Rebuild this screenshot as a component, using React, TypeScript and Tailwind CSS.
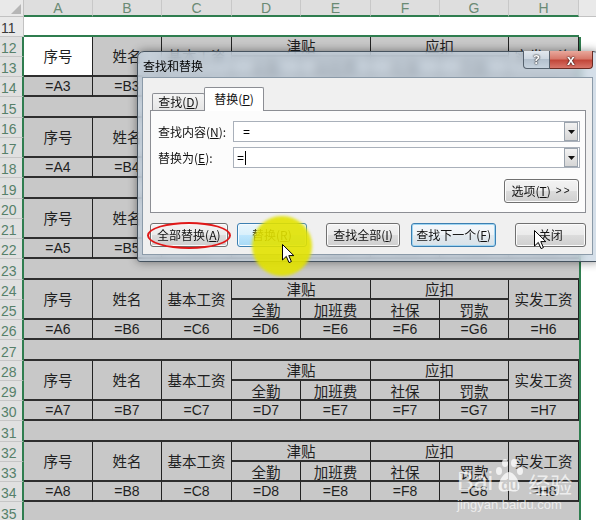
import React from "react";

const GRID = "grid grid-cols-[24px_69px_69px_70px_69px_70px_69px_69px_70px_1fr]";
const ZH = "font-['Noto_Sans_CJK_SC','Noto_Sans',sans-serif]";
const LAT = "font-['Liberation_Sans','Noto_Sans_CJK_SC',sans-serif]";
const COLSTART = ["col-start-2", "col-start-3", "col-start-4", "col-start-5", "col-start-6", "col-start-7", "col-start-8", "col-start-9"];
const LETTERS = ["A", "B", "C", "D", "E", "F", "G", "H"];

function RowHead({ n, cls, plain }: { n: number; cls: string; plain?: boolean }) {
  return (
    <div
      className={`${cls} ${plain ? "bg-[#e9e9e9] border-r border-r-[#c2c2c2] text-[#3a3a3a]" : "bg-[#e0e0e0] border-r-2 border-r-[#2f7d4f] text-[#56806a]"} border-b border-b-[#c6c6c6] flex items-center pl-[1px] pt-[3px] text-[14px] leading-none ${LAT}`}
    >
      {n}
    </div>
  );
}

function Block({ start, k, first }: { start: number; k: number; first?: boolean }) {
  const base = "border-r border-r-[#222222] border-b-2 border-b-[#2e2e2e] flex items-center justify-center text-[#1f1f1f]";
  const g = "bg-[#c8c8c8]";
  const zh = `${base} ${ZH} text-[14.5px] leading-none`;
  const fm = `${base} ${g} ${LAT} text-[14px] leading-none`;
  return (
    <div className={`${GRID} grid-rows-[20px_20px_20px_21px]`}>
      <RowHead n={start} cls="col-start-1 row-start-1" />
      <RowHead n={start + 1} cls="col-start-1 row-start-2" />
      <RowHead n={start + 2} cls="col-start-1 row-start-3" />
      <RowHead n={start + 3} cls="col-start-1 row-start-4" />
      <div className={`${zh} ${first ? "bg-white" : g} col-start-2 row-start-1 row-span-2`}>序号</div>
      <div className={`${zh} ${g} col-start-3 row-start-1 row-span-2`}>姓名</div>
      <div className={`${zh} ${g} col-start-4 row-start-1 row-span-2`}>基本工资</div>
      <div className={`${zh} ${g} col-start-5 col-span-2 row-start-1`}>津贴</div>
      <div className={`${zh} ${g} col-start-7 col-span-2 row-start-1`}>应扣</div>
      <div className={`${zh} ${g} col-start-9 row-start-1 row-span-2`}>实发工资</div>
      <div className={`${zh} ${g} col-start-5 row-start-2 pt-[3px]`}>全勤</div>
      <div className={`${zh} ${g} col-start-6 row-start-2 pt-[3px]`}>加班费</div>
      <div className={`${zh} ${g} col-start-7 row-start-2 pt-[3px]`}>社保</div>
      <div className={`${zh} ${g} col-start-8 row-start-2 pt-[3px]`}>罚款</div>
      {LETTERS.map((l, i) => (
        <div key={l} className={`${fm} ${COLSTART[i]} row-start-3`}>
          ={l}
          {k}
        </div>
      ))}
      <div className="col-start-2 col-span-8 row-start-4 bg-[#c8c8c8] border-b-2 border-b-[#2e2e2e]" />
      <div className="col-start-10 row-start-1 row-span-4 bg-white border-l-2 border-l-[#2f7d4f]" />
    </div>
  );
}

function Btn({ w, ml, kind, children }: { w: string; ml: string; kind?: "hover" | "focus"; children: React.ReactNode }) {
  const normal =
    "border-[#707070] bg-[linear-gradient(#f3f3f3,#ebebeb_48%,#dcdcdc_52%,#cfcfcf)] shadow-[inset_0_0_0_1px_#fbfbfb]";
  const hover =
    "border-[#3c7fb1] bg-[linear-gradient(#eaf6fd,#d9f0fc_48%,#bee6fd_52%,#a7d9f5)] shadow-[inset_0_0_0_1px_#f5fbfe]";
  const focus =
    "border-[#3c7fb1] bg-[linear-gradient(#f4f8fb,#eef3f7_48%,#e2e9ee_52%,#d8e2e9)] shadow-[inset_0_0_0_1px_#9fd5f2]";
  return (
    <div
      className={`${w} ${ml} h-[24px] rounded-[3px] border ${kind === "hover" ? hover : kind === "focus" ? focus : normal} flex items-center justify-center text-[12px] text-[#111] ${ZH} leading-none`}
    >
      {children}
    </div>
  );
}

function Arrow({ cls }: { cls: string }) {
  return (
    <svg className={cls} width="13" height="20" viewBox="0 0 13 20">
      <path d="M0.5 0.5 L0.5 16 L4.3 12.4 L7 18.6 L9.4 17.6 L6.8 11.6 L11.8 11.6 Z" fill="#fff" stroke="#000" strokeWidth="1" strokeLinejoin="round" />
    </svg>
  );
}

function Dropdown() {
  return (
    <div className="ml-auto w-[14px] h-[19px] border border-[#9aa3ad] bg-[linear-gradient(#f2f2f2,#e4e4e4_50%,#d6d6d6)] flex items-center justify-center">
      <svg width="7" height="4" viewBox="0 0 7 4">
        <path d="M0 0 L7 0 L3.5 4 Z" fill="#111" />
      </svg>
    </div>
  );
}

export default function App() {
  return (
    <div className="relative w-[596px] h-[520px] overflow-hidden bg-white">
      {/* column header */}
      <div className={`${GRID} h-[17px]`}>
        <div className="bg-[#e9e9e9] border-r border-b border-[#c2c2c2] relative">
          <svg className="absolute right-[2px] bottom-[2px]" width="10" height="10" viewBox="0 0 10 10">
            <path d="M10 0 L10 10 L0 10 Z" fill="#b6b6b6" />
          </svg>
        </div>
        {LETTERS.map((l) => (
          <div
            key={l}
            className={`bg-[#dedede] border-r border-r-[#c8c8c8] border-b-2 border-b-[#2f7d4f] flex items-center justify-center text-[14px] leading-none text-[#6a8a74] ${LAT}`}
          >
            {l}
          </div>
        ))}
        <div className="bg-[#e9e9e9] border-b border-[#c2c2c2]" />
      </div>
      {/* row 11 */}
      <div className={`${GRID} h-[20px]`}>
        <RowHead n={11} cls="col-start-1" plain />
        <div className="col-span-8 bg-white border-b-2 border-b-[#2f7d4f]" />
        <div className="bg-white" />
      </div>
      <Block start={12} k={3} first />
      <Block start={16} k={4} />
      <Block start={20} k={5} />
      <Block start={24} k={6} />
      <Block start={28} k={7} />
      <Block start={32} k={8} />

      {/* Find & Replace dialog */}
      <div className="absolute left-[137px] top-[51px] w-[463px] h-[211px] rounded-t-[7px] rounded-b-[3px] border border-[#46535f] bg-[#c3d2e0]/70 backdrop-blur-[4px] shadow-[0_0_10px_rgba(0,0,0,0.45)] flex flex-col">
        <div className="h-[25px] flex items-start shrink-0">
          <span className={`ml-[5px] mt-[6px] text-[12px] leading-[16px] text-black ${ZH}`}>查找和替换</span>
          <div className="ml-auto mr-[6px] -mt-px flex">
            <div className="w-[27px] h-[18px] rounded-bl-[4px] border border-t-0 border-[#56626e] bg-[linear-gradient(#e2e8ee,#cbd5df_50%,#b3c0cd_50%,#c7d3de)] flex items-center justify-center">
              <span className="text-[13px] font-bold leading-none text-white [text-shadow:0_0_1px_#000,0_0_2px_#222]">?</span>
            </div>
            <div className="w-[43px] h-[18px] rounded-br-[4px] border border-l-0 border-t-0 border-[#6b2a22] bg-[linear-gradient(#e9a89c,#d77a6c_45%,#c2473a_55%,#d8766a)] flex items-center justify-center">
              <span className={`text-[14px] font-bold leading-none text-white [text-shadow:0_0_1px_#000,0_0_2px_#300] ${LAT}`}>x</span>
            </div>
          </div>
        </div>
        <div className="ml-[4px] mr-[6px] mb-[6px] flex-1 bg-[#f0f0f0] border border-[#8b9aa8] flex flex-col pt-[9px] pl-[7px] pr-[6px]">
          {/* tabs */}
          <div className="flex items-end h-[23px] pl-[2px]">
            <div className={`w-[53px] h-[17px] rounded-t-[2px] border border-b-0 border-[#8c8e94] bg-[linear-gradient(#f4f4f4,#e6e6e6)] flex items-center justify-center text-[12px] leading-none text-[#111] ${ZH}`}>
              查找(<u className="underline-offset-[1px]">D</u>)
            </div>
            <div className={`relative z-10 -ml-px -mb-px w-[60px] h-[24px] rounded-t-[2px] border border-b-0 border-[#8c8e94] bg-white flex items-center justify-center pb-[2px] text-[12px] leading-none text-[#111] ${ZH}`}>
              替换(<u className="underline-offset-[1px]">P</u>)
            </div>
          </div>
          {/* panel */}
          <div className="h-[103px] border border-[#8c8e94] bg-[#fcfcfc] flex flex-col pt-[10px] pl-[7px] pr-[5px]">
            <div className="flex items-center h-[21px]">
              <span className={`w-[75px] text-[12px] leading-none text-[#111] ${ZH}`}>
                查找内容(<u className="underline-offset-[1px]">N</u>):
              </span>
              <div className="flex-1 h-[21px] border border-[#a9b0ba] bg-white flex items-center pl-[9px] pr-[1px]">
                <span className={`text-[12px] leading-none text-black ${LAT}`}>=</span>
                <Dropdown />
              </div>
            </div>
            <div className="flex items-center h-[21px] mt-[5px]">
              <span className={`w-[75px] text-[12px] leading-none text-[#111] ${ZH}`}>
                替换为(<u className="underline-offset-[1px]">E</u>):
              </span>
              <div className="flex-1 h-[21px] border border-[#a9b0ba] bg-white flex items-center pl-[3px] pr-[1px]">
                <span className={`text-[12px] leading-none text-black ${LAT}`}>=</span>
                <span className="w-px h-[14px] bg-black ml-[1px]" />
                <Dropdown />
              </div>
            </div>
            <div className="flex justify-end mt-[11px] pr-[1px]">
              <Btn w="w-[75px]" ml="ml-0">
                <span>
                  选项(<u className="underline-offset-[1px]">T</u>)
                </span>
                <span className={`ml-[5px] text-[10px] tracking-[2px] ${LAT}`}>&gt;&gt;</span>
              </Btn>
            </div>
          </div>
          {/* bottom buttons */}
          <div className="flex mt-[10px]">
            <Btn w="w-[78px]" ml="ml-0">
              全部替换(<u className="underline-offset-[1px]">A</u>)
            </Btn>
            <Btn w="w-[71px]" ml="ml-[9px]" kind="hover">
              替换(<u className="underline-offset-[1px]">R</u>)
            </Btn>
            <Btn w="w-[74px]" ml="ml-[19px]">
              查找全部(<u className="underline-offset-[1px]">I</u>)
            </Btn>
            <Btn w="w-[86px]" ml="ml-[11px]" kind="focus">
              查找下一个(<u className="underline-offset-[1px]">F</u>)
            </Btn>
            <Btn w="w-[71px]" ml="ml-[19px]">
              关闭
            </Btn>
          </div>
        </div>
      </div>

      {/* annotations */}
      <div className="absolute left-[147px] top-[222px] w-[84px] h-[27px] rounded-[50%] border-2 border-[#e01818]" />
      <div className="absolute left-[252px] top-[216px] w-[60px] h-[60px] rounded-full bg-[#e2e200]/90 blur-[1.5px]" />
      <Arrow cls="absolute left-[282px] top-[244px]" />
      <Arrow cls="absolute left-[534px] top-[230px]" />

      {/* watermark */}
      <div className="absolute left-[457px] top-[458px] text-white/70 pointer-events-none">
        <div className="flex items-end h-[36px]">
          <span className={`text-[25px] leading-none ${LAT}`}>Bai</span>
          <div className="relative w-[32px] h-[36px]">
            <svg className="absolute left-0 top-0" width="32" height="36" viewBox="0 0 32 36">
              <g fill="rgba(255,255,255,0.75)">
                <ellipse cx="6" cy="13" rx="3" ry="4" />
                <ellipse cx="12" cy="5" rx="3" ry="4" />
                <ellipse cx="21" cy="5" rx="3" ry="4" />
                <ellipse cx="27" cy="13" rx="3" ry="4" />
                <path d="M16 14 C10 14 4 26 6 31 C8 35 13 33 16 33 C19 33 24 35 26 31 C28 26 22 14 16 14 Z" />
              </g>
            </svg>
            <span className={`absolute left-[8px] bottom-[2px] text-[14px] font-bold leading-none text-[#c8c8c8] ${LAT}`}>du</span>
          </div>
          <span className={`ml-[3px] text-[22px] leading-none ${ZH}`}>经验</span>
        </div>
        <div className={`text-[13px] leading-none mt-[4px] ${LAT}`}>jingyan.baidu.com</div>
      </div>
    </div>
  );
}
